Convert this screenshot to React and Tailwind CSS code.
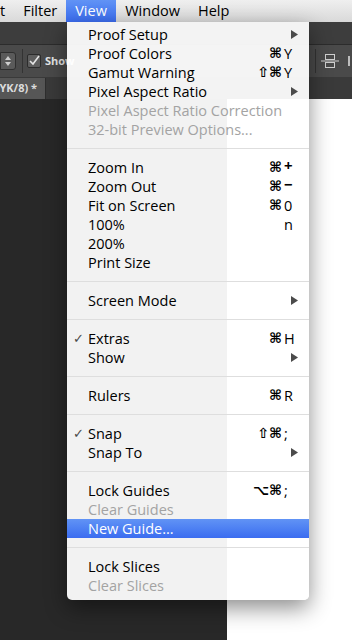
import React from 'react';

const FONT = { fontFamily: '"Open Sans", "DejaVu Sans", sans-serif' };

// modifier glyphs + key, laid out in two columns like the mac menu
const Shortcut = ({ mods, k, bold }) => (
  <span className="flex items-center">
    <span className="text-right text-[14px] font-bold font-['DejaVu_Sans',sans-serif]">{mods}</span>
    <span className={`w-[12px] ml-[2px] text-left ${bold ? 'text-[15px] leading-[15px] font-bold -translate-y-[2px]' : 'text-[14.5px]'}`}>{k}</span>
  </span>
);

const Arrow = () => (
  <svg width="7" height="9" viewBox="0 0 7 9" className="mr-[-2px]">
    <polygon points="0,0 7,4.5 0,9" fill="#4b4b4b" />
  </svg>
);

const Item = ({ label, checked, disabled, active, right }) => (
  <div
    className={`h-[19px] flex items-center pr-[13px] ${
      active ? 'bg-gradient-to-b from-[#6193f5] to-[#3b6cf0] text-white' : disabled ? 'text-[#a3a3a3]' : 'text-black'
    }`}
  >
    <span className="w-[21px] pl-[6px] text-[13px] text-[#4a4a4a] font-['DejaVu_Sans',sans-serif]">{checked ? '✓' : ''}</span>
    <span className="flex-1 text-[14.5px] leading-[19px] font-medium">{label}</span>
    {right}
  </div>
);

const Sep = () => (
  <div className="h-[19px] flex items-center">
    <div className="w-full h-px bg-[#dedede]" />
  </div>
);

const sections = [
  [
    { label: 'Proof Setup', right: <Arrow /> },
    { label: 'Proof Colors', right: <Shortcut mods="⌘" k="Y" /> },
    { label: 'Gamut Warning', right: <Shortcut mods="⇧⌘" k="Y" /> },
    { label: 'Pixel Aspect Ratio', right: <Arrow /> },
    { label: 'Pixel Aspect Ratio Correction', disabled: true },
    { label: '32-bit Preview Options...', disabled: true },
  ],
  [
    { label: 'Zoom In', right: <Shortcut mods="⌘" k="+" bold /> },
    { label: 'Zoom Out', right: <Shortcut mods="⌘" k="−" bold /> },
    { label: 'Fit on Screen', right: <Shortcut mods="⌘" k="0" /> },
    { label: '100%', right: <Shortcut mods="" k="n" /> },
    { label: '200%' },
    { label: 'Print Size' },
  ],
  [{ label: 'Screen Mode', right: <Arrow /> }],
  [
    { label: 'Extras', checked: true, right: <Shortcut mods="⌘" k="H" /> },
    { label: 'Show', right: <Arrow /> },
  ],
  [{ label: 'Rulers', right: <Shortcut mods="⌘" k="R" /> }],
  [
    { label: 'Snap', checked: true, right: <Shortcut mods="⇧⌘" k=";" /> },
    { label: 'Snap To', right: <Arrow /> },
  ],
  [
    { label: 'Lock Guides', right: <Shortcut mods="⌥⌘" k=";" /> },
    { label: 'Clear Guides', disabled: true },
    { label: 'New Guide...', active: true },
  ],
  [
    { label: 'Lock Slices' },
    { label: 'Clear Slices', disabled: true },
  ],
];

export default function App() {
  return (
    <div className="relative w-[352px] h-[640px] overflow-hidden bg-[#282828] flex flex-col" style={FONT}>
      {/* mac menu bar */}
      <div className="h-[22px] flex items-center text-[14.5px] font-medium text-black bg-gradient-to-b from-[#efefef] to-[#d9d9d9] shrink-0">
        <span className="pr-[9px]">t</span>
        <span className="px-[9px]">Filter</span>
        <span className="h-full flex items-center px-[9px] w-[50px] text-white bg-gradient-to-b from-[#6193f5] to-[#3b6cf0]">View</span>
        <span className="px-[9px]">Window</span>
        <span className="px-[9px]">Help</span>
      </div>

      {/* app bar */}
      <div className="h-[23px] bg-[#3d3d3d] border-b border-[#2c2c2c] shrink-0" />

      {/* options bar */}
      <div className="h-[32px] bg-[#4a4a4a] flex items-center shrink-0">
        <div className="w-[16px] h-[18px] bg-[#5a5a5a] border border-[#2f2f2f] rounded-r-[3px] flex items-center justify-center">
          <svg width="6" height="10" viewBox="0 0 6 10">
            <polygon points="3,0 6,4 0,4" fill="#cfcfcf" />
            <polygon points="0,6 6,6 3,10" fill="#cfcfcf" />
          </svg>
        </div>
        <div className="w-px h-[24px] bg-[#333] ml-[6px]" />
        <div className="ml-[4px] w-[14px] h-[14px] bg-[#5e5e5e] border border-[#2c2c2c] rounded-[2px] flex items-center justify-center">
          <svg width="12" height="12" viewBox="0 0 12 12">
            <path d="M2 6 L5 9 L11 1" stroke="#e5e5e5" strokeWidth="1.6" fill="none" />
          </svg>
        </div>
        <span className="ml-[4px] text-[11px] font-bold text-[#e6e6e6]">Show</span>
        <div className="flex-1" />
        <div className="w-px h-[24px] bg-[#333] mr-[4px]" />
        <svg width="20" height="16" viewBox="0 0 20 16" className="mr-[8px]">
          <rect x="5.5" y="1.5" width="9" height="5" fill="none" stroke="#cfcfcf" />
          <rect x="5.5" y="9.5" width="9" height="5" fill="none" stroke="#cfcfcf" />
          <line x1="1" y1="8" x2="19" y2="8" stroke="#cfcfcf" />
        </svg>
        <div className="w-[2px] h-[10px] bg-[#bdbdbd] mr-[2px]" />
      </div>

      {/* document tabs */}
      <div className="h-[22px] bg-[#3a3a3a] flex items-end shrink-0">
        <div className="h-[21px] w-[46px] overflow-hidden bg-[#565656] border-r border-[#2e2e2e] flex items-center justify-end pr-[8px] whitespace-nowrap text-[11px] font-bold text-[#dcdcdc]">
          CMYK/8) *
        </div>
      </div>

      {/* workspace */}
      <div className="flex-1 flex">
        <div className="w-[227px] bg-[#282828]" />
        <div className="flex-1 bg-white" />
      </div>

      {/* open View menu */}
      <div className="absolute left-[67px] top-[22px] w-[242px] pt-[3px] pb-[5px] bg-[rgba(255,255,255,0.94)] rounded-b-[5px] shadow-[0_8px_22px_rgba(0,0,0,0.45)]">
        {sections.map((items, si) => (
          <div key={si}>
            {si > 0 && <Sep />}
            {items.map((it) => (
              <Item key={it.label} {...it} />
            ))}
          </div>
        ))}
      </div>
    </div>
  );
}
